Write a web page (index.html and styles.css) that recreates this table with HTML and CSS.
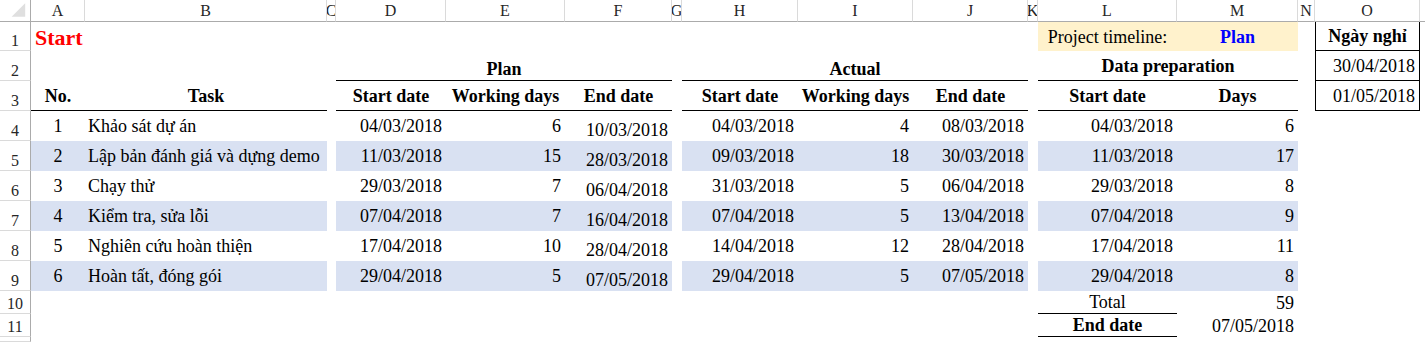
FILE: index.html
```html
<!DOCTYPE html>
<html lang="vi">
<head>
<meta charset="utf-8">
<title>Project timeline</title>
<link rel="stylesheet" href="styles.css">
</head>
<body>
<div class="sheet">
  <div class="row hdr">
    <div class="corner"><svg width="31" height="21" viewBox="0 0 31 21"><polygon points="12,17 26,17 26,3" fill="#dfdfdf"/></svg></div>
    <div class="ch">A</div>
    <div class="ch">B</div>
    <div class="ch">C</div>
    <div class="ch">D</div>
    <div class="ch">E</div>
    <div class="ch">F</div>
    <div class="ch">G</div>
    <div class="ch">H</div>
    <div class="ch">I</div>
    <div class="ch">J</div>
    <div class="ch">K</div>
    <div class="ch">L</div>
    <div class="ch">M</div>
    <div class="ch">N</div>
    <div class="ch">O</div>
    <div class="ch end"></div>
  </div>

  <div class="row r1">
    <div class="rh">1</div>
    <div class="title span2 bot">Start</div>
    <div></div>
    <div></div>
    <div></div>
    <div></div>
    <div></div>
    <div></div>
    <div></div>
    <div></div>
    <div></div>
    <div class="c yellow">Project timeline:</div>
    <div class="c yellow b blue">Plan</div>
    <div></div>
    <div class="c b box">Ngày nghỉ</div>
  </div>

  <div class="row">
    <div class="rh">2</div>
    <div></div>
    <div></div>
    <div></div>
    <div class="c b bb bot span3">Plan</div>
    <div></div>
    <div class="c b bb bot span3">Actual</div>
    <div></div>
    <div class="c b bb span2">Data preparation</div>
    <div></div>
    <div class="r box">30/04/2018</div>
  </div>

  <div class="row">
    <div class="rh">3</div>
    <div class="c b bb">No.</div>
    <div class="c b bb">Task</div>
    <div></div>
    <div class="c b bb">Start date</div>
    <div class="c b bb">Working days</div>
    <div class="c b bb">End date</div>
    <div></div>
    <div class="c b bb">Start date</div>
    <div class="c b bb">Working days</div>
    <div class="c b bb">End date</div>
    <div></div>
    <div class="c b bb">Start date</div>
    <div class="c b bb">Days</div>
    <div></div>
    <div class="r box">01/05/2018</div>
  </div>

  <div class="row">
    <div class="rh">4</div>
    <div class="d c">1</div>
    <div class="d l">Khảo sát dự án</div>
    <div></div>
    <div class="d r">04/03/2018</div>
    <div class="d r">6</div>
    <div class="d r bot">10/03/2018</div>
    <div></div>
    <div class="d r">04/03/2018</div>
    <div class="d r">4</div>
    <div class="d r">08/03/2018</div>
    <div></div>
    <div class="d r">04/03/2018</div>
    <div class="d r">6</div>
  </div>

  <div class="row alt">
    <div class="rh">5</div>
    <div class="d c">2</div>
    <div class="d l">Lập bản đánh giá và dựng demo</div>
    <div></div>
    <div class="d r">11/03/2018</div>
    <div class="d r">15</div>
    <div class="d r bot">28/03/2018</div>
    <div></div>
    <div class="d r">09/03/2018</div>
    <div class="d r">18</div>
    <div class="d r">30/03/2018</div>
    <div></div>
    <div class="d r">11/03/2018</div>
    <div class="d r">17</div>
  </div>

  <div class="row">
    <div class="rh">6</div>
    <div class="d c">3</div>
    <div class="d l">Chạy thử</div>
    <div></div>
    <div class="d r">29/03/2018</div>
    <div class="d r">7</div>
    <div class="d r bot">06/04/2018</div>
    <div></div>
    <div class="d r">31/03/2018</div>
    <div class="d r">5</div>
    <div class="d r">06/04/2018</div>
    <div></div>
    <div class="d r">29/03/2018</div>
    <div class="d r">8</div>
  </div>

  <div class="row alt">
    <div class="rh">7</div>
    <div class="d c">4</div>
    <div class="d l">Kiểm tra, sửa lỗi</div>
    <div></div>
    <div class="d r">07/04/2018</div>
    <div class="d r">7</div>
    <div class="d r bot">16/04/2018</div>
    <div></div>
    <div class="d r">07/04/2018</div>
    <div class="d r">5</div>
    <div class="d r">13/04/2018</div>
    <div></div>
    <div class="d r">07/04/2018</div>
    <div class="d r">9</div>
  </div>

  <div class="row">
    <div class="rh">8</div>
    <div class="d c">5</div>
    <div class="d l">Nghiên cứu hoàn thiện</div>
    <div></div>
    <div class="d r">17/04/2018</div>
    <div class="d r">10</div>
    <div class="d r bot">28/04/2018</div>
    <div></div>
    <div class="d r">14/04/2018</div>
    <div class="d r">12</div>
    <div class="d r">28/04/2018</div>
    <div></div>
    <div class="d r">17/04/2018</div>
    <div class="d r">11</div>
  </div>

  <div class="row alt">
    <div class="rh">9</div>
    <div class="d c">6</div>
    <div class="d l">Hoàn tất, đóng gói</div>
    <div></div>
    <div class="d r">29/04/2018</div>
    <div class="d r">5</div>
    <div class="d r bot">07/05/2018</div>
    <div></div>
    <div class="d r">29/04/2018</div>
    <div class="d r">5</div>
    <div class="d r">07/05/2018</div>
    <div></div>
    <div class="d r">29/04/2018</div>
    <div class="d r">8</div>
  </div>

  <div class="row short">
    <div class="rh">10</div>
    <div class="skip"></div>
    <div class="c bb bot">Total</div>
    <div class="r bot">59</div>
  </div>

  <div class="row short">
    <div class="rh">11</div>
    <div class="skip"></div>
    <div class="c b bb bot">End date</div>
    <div class="r bot">07/05/2018</div>
  </div>

  <div class="row tail">
    <div class="rh"></div>
  </div>
</div>
</body>
</html>
```

FILE: styles.css
```css
* {
  box-sizing: border-box;
}

html,
body {
  margin: 0;
  padding: 0;
  background: #ffffff;
}

body {
  width: 1425px;
  height: 342px;
  overflow: hidden;
  font-family: "Liberation Serif", "Times New Roman", serif;
  font-size: 18px;
  color: #000000;
}

.sheet {
  display: flex;
  flex-direction: column;
  height: 342px;
  overflow: hidden;
}

.row {
  display: grid;
  grid-template-columns: 31px 54px 242px 9px 110px 119px 107px 10px 116px 115px 115px 10px 139px 121px 17px 105px 1fr;
  height: 30px;
  flex: none;
}

.row > div {
  display: flex;
  align-items: center;
  min-width: 0;
  overflow: hidden;
  white-space: nowrap;
  line-height: 20px;
}

.hdr {
  height: 22px;
}

.r1 {
  height: 29px;
}

.short {
  height: 23px;
}

.tail {
  height: 5px;
}

/* headers */
.corner {
  border-right: 1px solid #ababab;
  border-bottom: 1px solid #ababab;
  align-items: flex-start !important;
}

.ch {
  justify-content: center;
  font-size: 16px;
  line-height: 18px !important;
  color: #262626;
  padding-top: 1px;
  border-right: 1px solid #dadada;
  border-bottom: 1px solid #ababab;
}

.ch.end {
  border-right: none;
}

.rh {
  justify-content: center;
  align-items: flex-end !important;
  font-size: 16px;
  line-height: 18px !important;
  color: #262626;
  border-right: 1px solid #ababab;
  border-bottom: 1px solid #dadada;
}

/* cell helpers */
.span2 {
  grid-column: span 2;
}

.span3 {
  grid-column: span 3;
}

.skip {
  grid-column: span 11;
}

.c {
  justify-content: center;
}

.r {
  justify-content: flex-end;
  padding-right: 4px;
}

.l {
  justify-content: flex-start;
  padding-left: 3px;
}

.b {
  font-weight: bold;
}

.bot {
  align-items: flex-end !important;
  padding-bottom: 1px;
}

.bb {
  border-bottom: 1px solid #000000;
}

.box {
  border-left: 1px solid #000000;
  border-right: 1px solid #000000;
  border-bottom: 1px solid #000000;
}

.title {
  font-size: 22px;
  line-height: 25px !important;
  font-weight: bold;
  color: #ff0000;
  padding-left: 4px;
}

.yellow {
  background: #fff2cc;
}

.blue {
  color: #0000ff;
}

.alt .d {
  background: #d9e1f2;
}
```
